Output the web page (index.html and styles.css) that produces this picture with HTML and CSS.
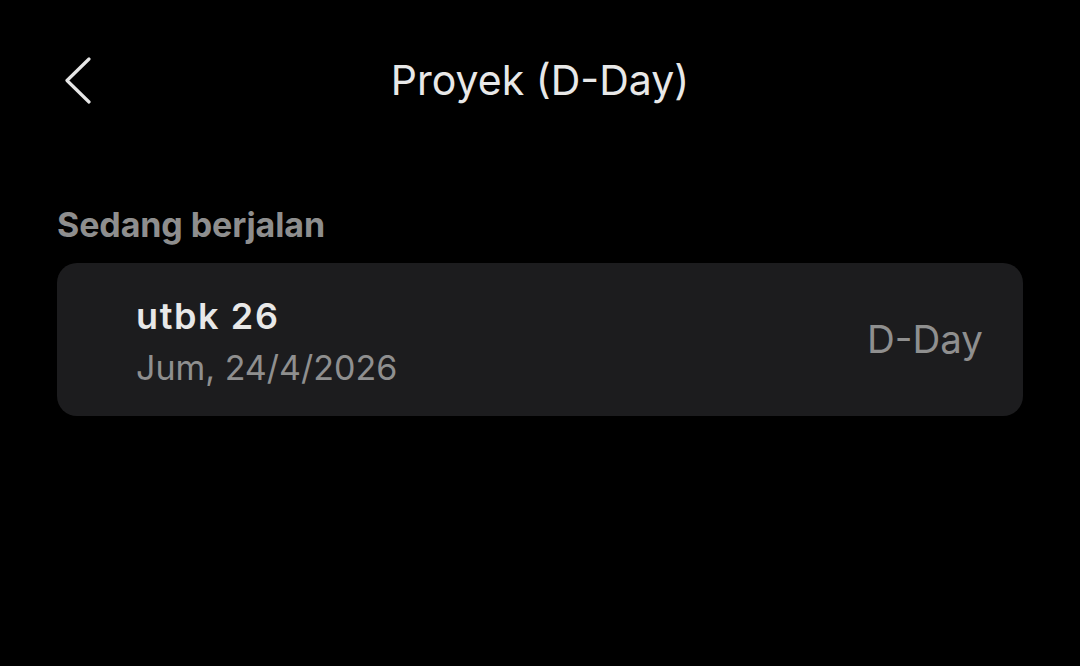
FILE: index.html
```html
<!DOCTYPE html>
<html>
<head>
<meta charset="utf-8">
<link rel="stylesheet" href="styles.css">
</head>
<body>
<div class="screen">
  <header class="nav">
    <button class="back" aria-label="Kembali">
      <svg width="30" height="48" viewBox="0 0 30 48"><path d="M26 3 L4 24.5 L26 46" fill="none" stroke="#e6e6e6" stroke-width="3.2" stroke-linecap="round" stroke-linejoin="round"/></svg>
    </button>
    <h1 class="title">Proyek (D-Day)</h1>
  </header>
  <section class="group">
    <h2 class="group-label">Sedang berjalan</h2>
    <div class="card">
      <div class="card-text">
        <div class="card-name">utbk 26</div>
        <div class="card-date">Jum, 24/4/2026</div>
      </div>
      <div class="card-dday">D-Day</div>
    </div>
  </section>
</div>
</body>
</html>
```
FILE: styles.css
```css
* { box-sizing: border-box; }
html, body { margin: 0; padding: 0; background: #000; }
body { font-family: Inter, "Noto Sans", sans-serif; color: #e8e8e8; width: 1080px; height: 666px; overflow: hidden; }
.screen { display: flex; flex-direction: column; }
.nav { position: relative; height: 160px; display: flex; align-items: flex-start; justify-content: center; padding-top: 52px; }
.back { position: absolute; left: 63px; top: 56px; background: none; border: 0; padding: 0; width: 30px; height: 48px; }
.back svg { display: block; }
.title { margin: 0; font-size: 41px; font-weight: 400; line-height: 56px; color: #e8e8e8; }
.group { padding: 0 57px; display: flex; flex-direction: column; }
.group-label { margin: 45px 0 0; font-size: 34px; font-weight: 700; color: #8e8e8e; line-height: 40px; height: 58px; letter-spacing: -0.1px; }
.card { background: #1c1c1e; border-radius: 20px; height: 153px; display: flex; align-items: flex-start; justify-content: space-between; padding: 31px 40px 0 79px; }
.card-text { display: flex; flex-direction: column; gap: 8px; }
.card-name { font-size: 36px; font-weight: 600; color: #e8e8e8; line-height: 44px; letter-spacing: 1.6px; }
.card-date { font-size: 34px; font-weight: 400; color: #8f8f8f; line-height: 44px; }
.card-dday { font-size: 38.5px; font-weight: 400; color: #8f8f8f; line-height: 44px; margin-top: 23px; }
```
